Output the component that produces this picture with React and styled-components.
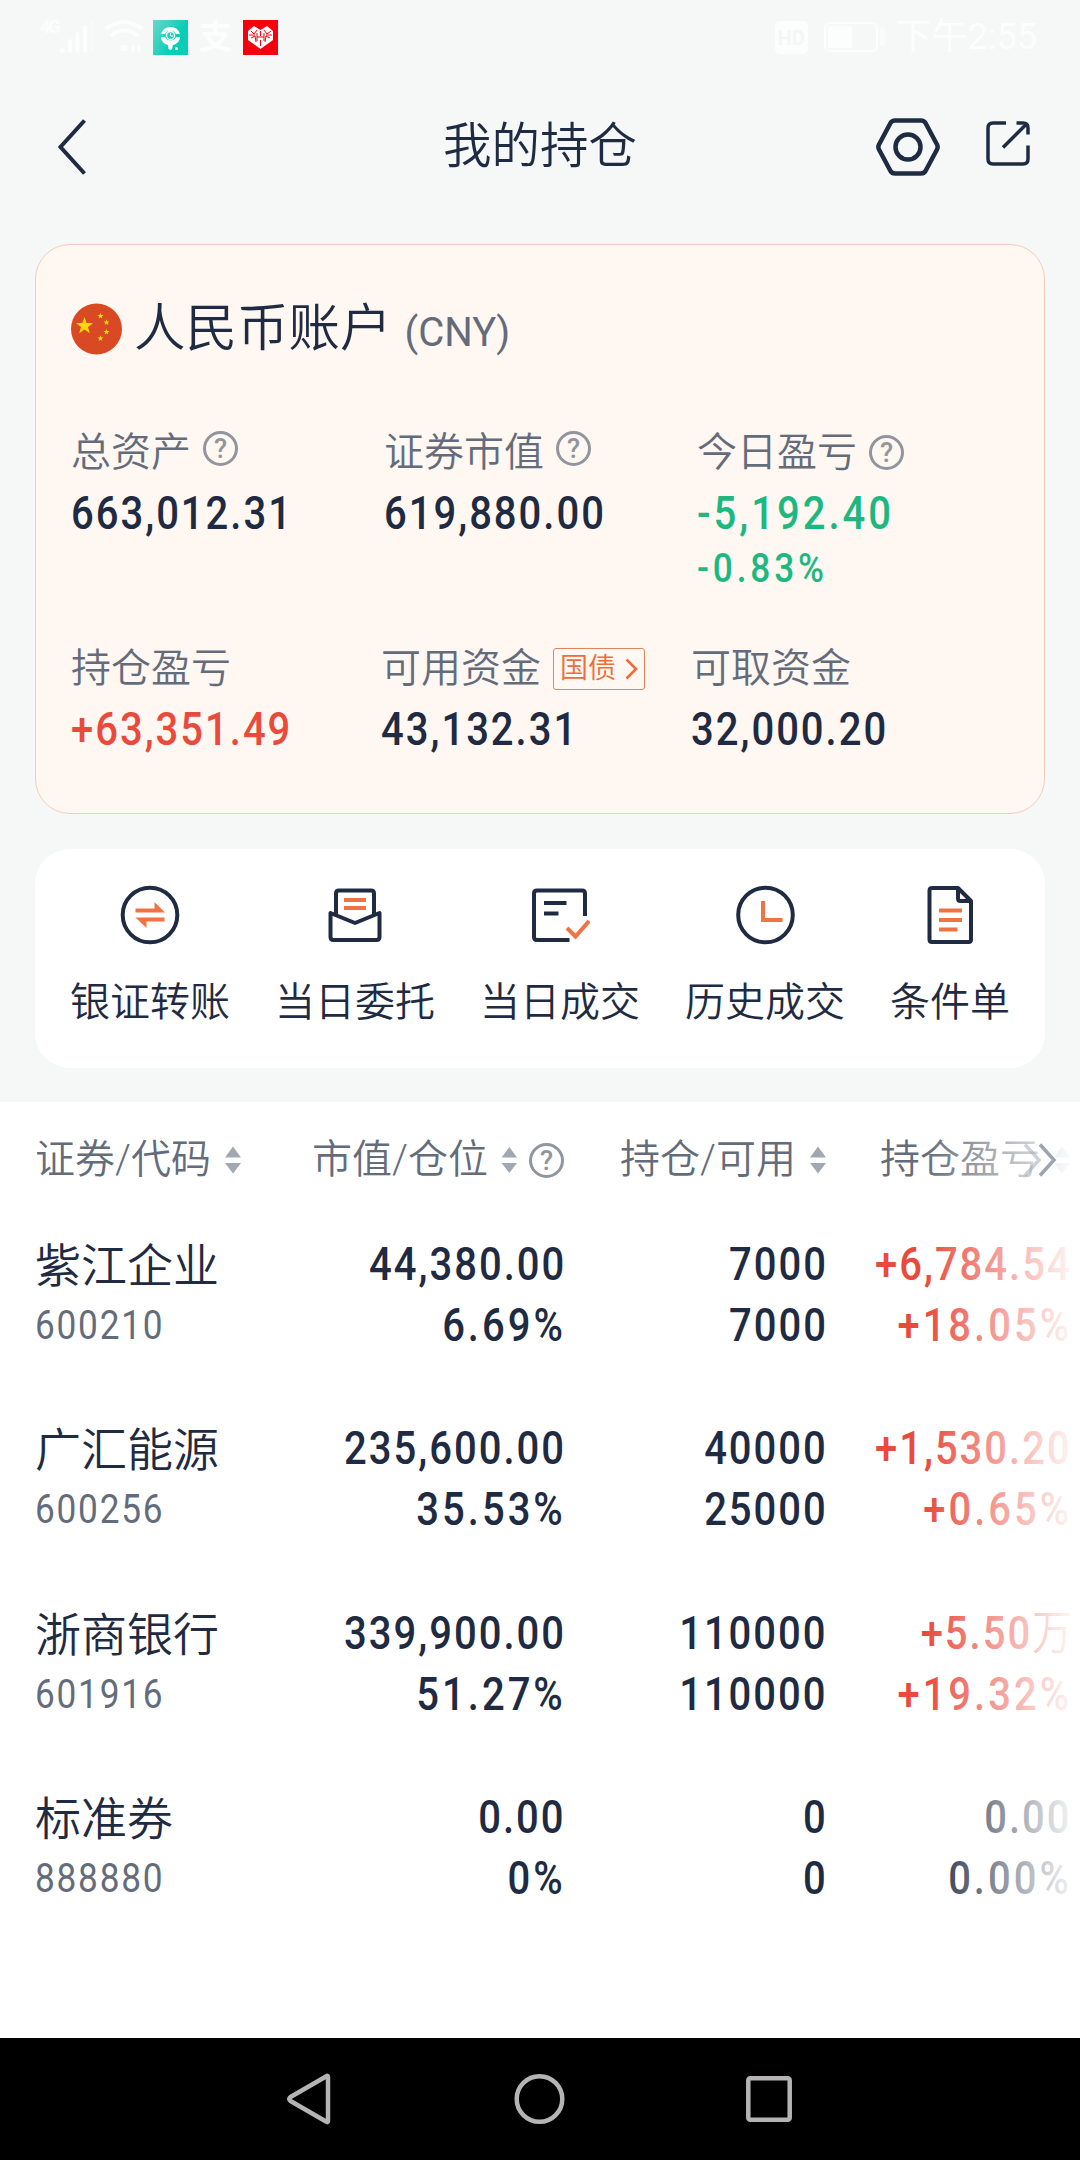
import React from "react";
import styled, { createGlobalStyle } from "styled-components";

const GlobalStyle = createGlobalStyle`
    * {
        box-sizing: border-box;
    }

    body {
        margin: 0;
        background: #f5f8f7;
        color: #1f2b42;
        font-family: Roboto, "Noto Sans CJK SC", sans-serif;
        font-weight: 350;
    }
`;

const INK = "#1f2b42";
const ORANGE = "#f07343";

const tones = {
    ink: "#1f2b42",
    up: "#ea4a3c",
    down: "#1db880",
    muted: "#646c7b",
};

const Page = styled.div`
    display: flex;
    flex-direction: column;
    width: 1080px;
    height: 2160px;
    overflow: hidden;
`;

/* Barra de estado */
const StatusBar = styled.div`
    display: flex;
    justify-content: space-between;
    height: 73px;
    padding: 18px 43px 0 40px;
    color: #fcfdfd;
`;

const StatusGroup = styled.div`
    display: flex;
    align-items: center;
    height: 38px;
`;

const NetworkLabel = styled.span`
    align-self: flex-start;
    width: 20px;
    font-size: 18px;
    font-weight: 700;
    line-height: 18px;
    letter-spacing: -2px;
`;

const PayLabel = styled.span`
    width: 35px;
    margin: 0 10px;
    font-size: 34px;
    font-weight: 700;
    line-height: 38px;
    text-align: center;
`;

const HdLabel = styled.span`
    width: 33px;
    height: 33px;
    border-radius: 5px;
    background: #fcfdfd;
    color: #f3f6f5;
    font-size: 20px;
    font-weight: 700;
    line-height: 34px;
    text-align: center;
`;

const Battery = styled.span`
    display: flex;
    width: 54px;
    height: 30px;
    margin-left: 16px;
    padding: 2px;
    border: 2px solid #fcfdfd;
    border-radius: 6px;

    &::before {
        content: "";
        width: 24px;
        border-radius: 2px;
        background: #fcfdfd;
    }
`;

const BatteryTip = styled.span`
    width: 5px;
    height: 18px;
    margin: 0 11px 0 2px;
    border-radius: 2px;
    background: #fafcfb;
`;

const Clock = styled.span`
    font-size: 36px;
    font-weight: 400;
    line-height: 38px;
    white-space: nowrap;
`;

/* Cabecera */
const Header = styled.header`
    display: grid;
    grid-template-columns: 204px 1fr 204px;
    align-items: center;
    height: 148px;
    margin-bottom: 23px;
    padding: 0 50px 0 58px;
`;

const Title = styled.h1`
    margin: 0;
    padding-right: 8px;
    font-size: 48.5px;
    font-weight: inherit;
    line-height: 60px;
    text-align: center;
`;

const HeaderActions = styled.div`
    display: flex;
    align-items: center;
    justify-content: flex-end;
    gap: 46px;
`;

/* Tarjeta de la cuenta */
const AccountCard = styled.section`
    height: 570px;
    margin: 0 35px;
    padding: 54px 0 0 35px;
    border: 1px solid #f1cdbd;
    border-radius: 35px;
    background: #fff7f1;
`;

const AccountTitle = styled.div`
    display: flex;
    align-items: center;
    height: 60px;
    margin-bottom: 69px;
`;

const AccountName = styled.h2`
    margin: 3px 0 0 12px;
    font-size: 51.5px;
    font-weight: inherit;
    line-height: 60px;
    white-space: nowrap;
`;

const Currency = styled.span`
    margin-left: 13px;
    color: #646c7b;
    font-size: 40px;
    font-weight: 400;
`;

const MetricRow = styled.div`
    display: grid;
    grid-template-columns: ${(props) => props.$columns};
    height: ${(props) => props.$height}px;
`;

const MetricLabel = styled.div`
    display: flex;
    align-items: center;
    height: 50px;
    margin-bottom: 10px;
    color: #646c7b;
    font-size: 40px;
    line-height: 50px;
    white-space: nowrap;
`;

/* Cifras estrechas, al estilo de una DIN */
const Figure = styled.div`
    width: max-content;
    margin-right: ${(props) => (props.$right ? -2 : 0)}px;
    color: ${(props) => tones[props.$tone || "ink"]};
    font-size: ${(props) => (props.$small ? 40 : 46.5)}px;
    font-weight: ${(props) => (props.$tone === "muted" ? 400 : 500)};
    line-height: ${(props) => props.$line || 50}px;
    letter-spacing: ${(props) => (props.$loose ? 0.075 : 0.05)}em;
    white-space: nowrap;
    transform: scaleX(${(props) => (props.$small ? 0.88 : 0.86)});
    transform-origin: ${(props) => (props.$right ? "right" : "left")};
`;

const Percent = styled(Figure)`
    margin-top: 6px;
    letter-spacing: 0.11em;
`;

const FigureUnit = styled.span`
    font-weight: 350;
    letter-spacing: 0;
`;

const HelpMark = styled.span`
    flex: none;
    width: 35px;
    height: 35px;
    margin: 0 0 ${(props) => props.$lift || 0}px 12px;
    border: 3px solid #91959d;
    border-radius: 50%;
    color: #91959d;
    font-size: 27px;
    font-weight: 500;
    line-height: 30px;
    text-align: center;
`;

const BondTag = styled.span`
    display: flex;
    align-items: center;
    gap: 9px;
    width: 92px;
    height: 42px;
    margin-left: 12px;
    padding-left: 6px;
    border: 1.5px solid #e2835c;
    border-radius: 3px;
    color: #ee6c38;
    font-size: 28px;
    line-height: 38px;
`;

/* Accesos directos */
const Shortcuts = styled.nav`
    display: flex;
    justify-content: space-between;
    height: 219px;
    margin: 35px 35px 34px;
    padding: 36px 35px 0;
    border-radius: 35px;
    background: #fff;
`;

const Shortcut = styled.div`
    display: flex;
    flex-direction: column;
    align-items: center;
    gap: 31px;
    font-size: 40px;
    line-height: 54px;
    white-space: nowrap;
`;

/* Tabla de posiciones */
const Holdings = styled.section`
    position: relative;
    flex: 1;
    padding: 28px 10px 0 35px;
    background: #fff;
`;

const HoldingsGrid = styled.div`
    display: grid;
    grid-template-columns: 277px 252px 262px 244px;
    height: ${(props) => props.$height}px;
`;

const HeadGrid = styled(HoldingsGrid)`
    margin-bottom: 44px;
`;

const HeadCell = styled.div`
    display: flex;
    align-items: center;
    justify-content: ${(props) => (props.$first ? "flex-start" : "flex-end")};
    height: 60px;
    color: #646c7b;
    font-size: 40px;
    line-height: 60px;
    white-space: nowrap;
`;

const StockName = styled.div`
    font-size: 46px;
    line-height: 65px;
`;

const FigurePair = styled.div`
    display: flex;
    flex-direction: column;
    align-items: flex-end;
`;

const Fade = styled.div`
    position: absolute;
    top: 0;
    right: 0;
    bottom: 0;
    width: 155px;
    background: linear-gradient(90deg, rgba(255, 255, 255, 0), #fff);
`;

const MoreColumns = styled.div`
    position: absolute;
    top: 41px;
    right: 23px;
`;

const NavBar = styled.footer`
    display: flex;
    align-items: center;
    justify-content: space-between;
    height: 122px;
    padding: 0 288px 0 286px;
    background: #000;
`;

const SignalIcon = () => (
    <svg width="93" height="38" viewBox="60 18 93 38" fill="#fcfdfd">
        <circle cx="62.5" cy="50.5" r="2.5" />
        <rect x="68" y="39" width="4" height="14" rx="2" />
        <rect x="75.500" y="32" width="4" height="21" rx="2" />
        <rect x="83" y="25" width="4" height="28" rx="2" />
        <rect x="90.500" y="19" width="4" height="34" rx="2" opacity=".4" />
        <g transform="translate(-1 0)" fill="none" stroke="#fcfdfd" strokeWidth="4" strokeLinecap="round">
            <path d="M108 28 Q125 16 142 28" />
            <path d="M113 35 Q125 26 138 35" />
            <circle cx="125" cy="48" r="1.500" />
            <path d="M134 47v4M140 47v4" strokeWidth="3" />
        </g>
    </svg>
);

const LocatorAppIcon = () => (
    <svg width="35" height="35" viewBox="0 0 35 35">
        <defs>
            <linearGradient id="teal" x1="0" y1="0" x2="1" y2="0.6">
                <stop offset="0" stopColor="#68d8c9" />
                <stop offset="0.75" stopColor="#08ceb8" />
            </linearGradient>
        </defs>
        <rect width="35" height="35" fill="url(#teal)" />
        <path d="M8 14a10 10 0 0 1 19 0h-4a6.200 6.200 0 0 0-11 0zM8 17h4a6.200 6.200 0 0 0 11 0h4c0 4-3 7-7 8l-1 4-1.500 1-2-1-.5-4c-4-1-7-4-7-8z" fill="#fff" />
        <circle cx="17.500" cy="15.500" r="4" fill="none" stroke="#fff" strokeWidth="1.300" />
        <path d="M17.500 13v3h2.500" fill="none" stroke="#fff" />
        <circle cx="23.500" cy="28.500" r="1.500" fill="#fff" />
    </svg>
);

const HeartAppIcon = () => (
    <svg width="35" height="35" viewBox="0 0 35 35">
        <rect width="35" height="35" fill="#f5000c" />
        <path d="M17.500 29L5 20V11l6-5 6.500 4L24 6l6 5v9z" fill="#fff" />
        <path d="M8 11l3 3 3-4M21 10l3 4 4-3M8 18l4-2 1 6M27 18l-4-2-1 6M14 13v8M21 13v8M14 17h7M17.500 11v5M17.500 20v6M6 15h6M23 15h6" fill="none" stroke="#f5000c" strokeWidth="1" />
    </svg>
);

const BackIcon = () => (
    <svg width="30" height="56" viewBox="0 0 30 56" fill="none" stroke={INK} strokeWidth="4">
        <path d="M26.500 1.500L2.500 28l24 26.500" />
    </svg>
);

const SettingsIcon = () => (
    <svg width="64" height="58" viewBox="0 0 64 58" fill="none" stroke={INK} strokeWidth="4.500" strokeLinejoin="round">
        <path d="M19 2.500H45Q48 2.500 49.500 5L61 26.500Q62.300 29 61 31.500L49.500 53Q48 55.500 45 55.500H19Q16 55.500 14.500 53L3 31.500Q1.700 29 3 26.500L14.500 5Q16 2.500 19 2.500Z" />
        <circle cx="32" cy="29" r="12.500" />
    </svg>
);

const ShareIcon = () => (
    <svg width="44" height="58" viewBox="0 0 44 58" fill="none" stroke={INK} strokeWidth="3.500">
        <path d="M20 5H7Q2 5 2 10V41Q2 46 7 46H37Q42 46 42 41V27.500M30.500 5H37Q42 5 42 10V16.500M17 29.500L40.500 6" />
    </svg>
);

const starPoints = (cx, cy, r) =>
    Array.from({ length: 10 }, (_, i) => {
        const radius = i % 2 ? r * 0.4 : r;
        const angle = (Math.PI / 5) * i - Math.PI / 2;
        return `${cx + radius * Math.cos(angle)},${cy + radius * Math.sin(angle)}`;
    }).join(" ");

const FlagIcon = () => (
    <svg width="51" height="52" viewBox="0 0 51 52">
        <circle cx="25.500" cy="26" r="25.500" fill="#d84924" />
        <g fill="#ffd80a">
            <polygon points={starPoints(13.5, 23, 9)} />
            <polygon points={starPoints(29.5, 13, 3.2)} />
            <polygon points={starPoints(35.5, 19.5, 3.2)} />
            <polygon points={starPoints(35.5, 29, 3.2)} />
            <polygon points={starPoints(29.5, 35.5, 3.2)} />
        </g>
    </svg>
);

const ChevronIcon = () => (
    <svg width="13" height="22" viewBox="0 0 13 22" fill="none" stroke="#ee6c38" strokeWidth="2.600">
        <path d="M1.500 1.500L11 11 1.500 20.500" />
    </svg>
);

const SortIcon = () => (
    <svg width="30" height="28" viewBox="-14 0 30 28" fill="#a2a8b2">
        <path d="M8 .5L16 11.500H0zM8 27.500L0 17H16z" />
    </svg>
);

const TransferIcon = () => (
    <svg width="60" height="60" viewBox="0 0 60 60">
        <circle cx="30" cy="30" r="27.300" fill="none" stroke={INK} strokeWidth="4" />
        <path d="M15.500 23.500H34.500V17L45 27.500H15.500zM44.500 32.500V36.500H26.500V43L15.500 32.500z" fill={ORANGE} />
    </svg>
);

const OrdersIcon = () => (
    <svg width="60" height="60" viewBox="0 0 60 60" fill="none" stroke={INK} strokeWidth="4" strokeLinejoin="round">
        <path d="M11 30V8.500Q11 5.500 14 5.500H46Q49 5.500 49 8.500V30" />
        <path d="M5.500 28L30 38 54.500 28V52Q54.500 55 51.500 55H8.500Q5.500 55 5.500 52Z" />
        <path d="M19 15H41M19 23H41" stroke={ORANGE} />
    </svg>
);

const DealsIcon = () => (
    <svg width="60" height="60" viewBox="0 0 60 60" fill="none" stroke={INK} strokeWidth="4">
        <path d="M39.500 55H7Q4 55 4 52V8.500Q4 5.500 7 5.500H52Q55 5.500 55 8.500V31" />
        <path d="M14 18H36.500M14 28.500H28.500" />
        <path d="M37 43L45.500 51.500 59 36" stroke={ORANGE} />
    </svg>
);

const HistoryIcon = () => (
    <svg width="60" height="60" viewBox="0 0 60 60" fill="none" strokeWidth="4">
        <circle cx="30.500" cy="30" r="27.300" stroke={INK} />
        <path d="M28 16V35H47.500" stroke={ORANGE} />
    </svg>
);

const ConditionIcon = () => (
    <svg width="60" height="60" viewBox="0 0 60 60" fill="none" stroke={INK} strokeWidth="4" strokeLinejoin="round">
        <path d="M11.500 3H38L51 16V54.500Q51 57 48.500 57H12Q9.500 57 9.500 54.500V5.500Q9.500 3 12 3" />
        <path d="M38 3V13.500Q38 16 40.500 16H51" />
        <path d="M19 25.500H42M19 35H42M19 44.500H37.500" stroke={ORANGE} />
    </svg>
);

const MoreIcon = () => (
    <svg width="34" height="34" viewBox="0 0 34 34" fill="none" stroke="#9ea4af" strokeWidth="3.500">
        <path d="M2 1.500L16 17 2 32.500" opacity=".5" />
        <path d="M17 1.500L31 17 17 32.500" />
    </svg>
);

const shortcuts = [
    { label: "银证转账", Icon: TransferIcon },
    { label: "当日委托", Icon: OrdersIcon },
    { label: "当日成交", Icon: DealsIcon },
    { label: "历史成交", Icon: HistoryIcon },
    { label: "条件单", Icon: ConditionIcon },
];

const holdings = [
    { name: "紫江企业", code: "600210", value: "44,380.00", share: "6.69%", held: "7000", usable: "7000", profit: "+6,784.54", rate: "+18.05%", tone: "up" },
    { name: "广汇能源", code: "600256", value: "235,600.00", share: "35.53%", held: "40000", usable: "25000", profit: "+1,530.20", rate: "+0.65%", tone: "up" },
    { name: "浙商银行", code: "601916", value: "339,900.00", share: "51.27%", held: "110000", usable: "110000", profit: "+5.50", unit: "万", rate: "+19.32%", tone: "up" },
    { name: "标准券", code: "888880", value: "0.00", share: "0%", held: "0", usable: "0", profit: "0.00", rate: "0.00%", tone: "ink" },
];

const Pair = ({ top, unit, bottom, tone }) => (
    <FigurePair>
        <Figure $right $line={61} $tone={tone}>
            {top}
            {unit && <FigureUnit>{unit}</FigureUnit>}
        </Figure>
        <Figure $right $line={61} $tone={tone} $loose={bottom.endsWith("%")}>
            {bottom}
        </Figure>
    </FigurePair>
);

const App = () => {
    return (
        <Page>
            <GlobalStyle />
            <StatusBar>
                <StatusGroup>
                    <NetworkLabel>4G</NetworkLabel>
                    <SignalIcon />
                    <LocatorAppIcon />
                    <PayLabel>支</PayLabel>
                    <HeartAppIcon />
                </StatusGroup>
                <StatusGroup>
                    <HdLabel>HD</HdLabel>
                    <Battery />
                    <BatteryTip />
                    <Clock>下午2:55</Clock>
                </StatusGroup>
            </StatusBar>

            <Header>
                <BackIcon />
                <Title>我的持仓</Title>
                <HeaderActions>
                    <SettingsIcon />
                    <ShareIcon />
                </HeaderActions>
            </Header>

            <AccountCard>
                <AccountTitle>
                    <FlagIcon />
                    <AccountName>
                        人民币账户<Currency>(CNY)</Currency>
                    </AccountName>
                </AccountTitle>
                <MetricRow $columns="313px 313px 1fr" $height={216}>
                    <div>
                        <MetricLabel>总资产<HelpMark $lift={9}>?</HelpMark></MetricLabel>
                        <Figure>663,012.31</Figure>
                    </div>
                    <div>
                        <MetricLabel>证券市值<HelpMark $lift={9}>?</HelpMark></MetricLabel>
                        <Figure>619,880.00</Figure>
                    </div>
                    <div>
                        <MetricLabel>今日盈亏<HelpMark $lift={2}>?</HelpMark></MetricLabel>
                        <Figure $tone="down" $loose>-5,192.40</Figure>
                        <Percent $tone="down" $small>-0.83%</Percent>
                    </div>
                </MetricRow>
                <MetricRow $columns="310px 310px 1fr" $height={120}>
                    <div>
                        <MetricLabel>持仓盈亏</MetricLabel>
                        <Figure $tone="up">+63,351.49</Figure>
                    </div>
                    <div>
                        <MetricLabel>
                            可用资金
                            <BondTag>国债<ChevronIcon /></BondTag>
                        </MetricLabel>
                        <Figure>43,132.31</Figure>
                    </div>
                    <div>
                        <MetricLabel>可取资金</MetricLabel>
                        <Figure>32,000.20</Figure>
                    </div>
                </MetricRow>
            </AccountCard>

            <Shortcuts>
                {shortcuts.map(({ label, Icon }) => (
                    <Shortcut key={label}>
                        <Icon />
                        {label}
                    </Shortcut>
                ))}
            </Shortcuts>

            <Holdings>
                <HeadGrid $height={60}>
                    <HeadCell $first>证券/代码<SortIcon /></HeadCell>
                    <HeadCell>市值/仓位<SortIcon /><HelpMark>?</HelpMark></HeadCell>
                    <HeadCell>持仓/可用<SortIcon /></HeadCell>
                    <HeadCell>持仓盈亏<SortIcon /></HeadCell>
                </HeadGrid>
                {holdings.map((stock) => (
                    <HoldingsGrid key={stock.code} $height={184.3}>
                        <div>
                            <StockName>{stock.name}</StockName>
                            <Figure $tone="muted" $small $line={53}>{stock.code}</Figure>
                        </div>
                        <Pair top={stock.value} bottom={stock.share} />
                        <Pair top={stock.held} bottom={stock.usable} />
                        <Pair top={stock.profit} unit={stock.unit} bottom={stock.rate} tone={stock.tone} />
                    </HoldingsGrid>
                ))}
                <Fade />
                <MoreColumns>
                    <MoreIcon />
                </MoreColumns>
            </Holdings>

            <NavBar>
                <svg width="46" height="52" viewBox="0 0 46 52" fill="none" stroke="#b5b3b3" strokeWidth="4.500" strokeLinejoin="round">
                    <path d="M42 4V48Q42 50 40 48.500L4.500 28Q2 26 4.500 24L40 3.500Q42 2 42 4Z" />
                </svg>
                <svg width="52" height="52" viewBox="0 0 52 52" fill="none" stroke="#b5b3b3" strokeWidth="4.500">
                    <circle cx="26.500" cy="26" r="22.800" />
                </svg>
                <svg width="46" height="46" viewBox="0 0 46 46" fill="none" stroke="#b5b3b3" strokeWidth="4.500">
                    <rect x="2.300" y="2.300" width="41.400" height="41.400" rx="2" />
                </svg>
            </NavBar>
        </Page>
    );
};

export default App;
